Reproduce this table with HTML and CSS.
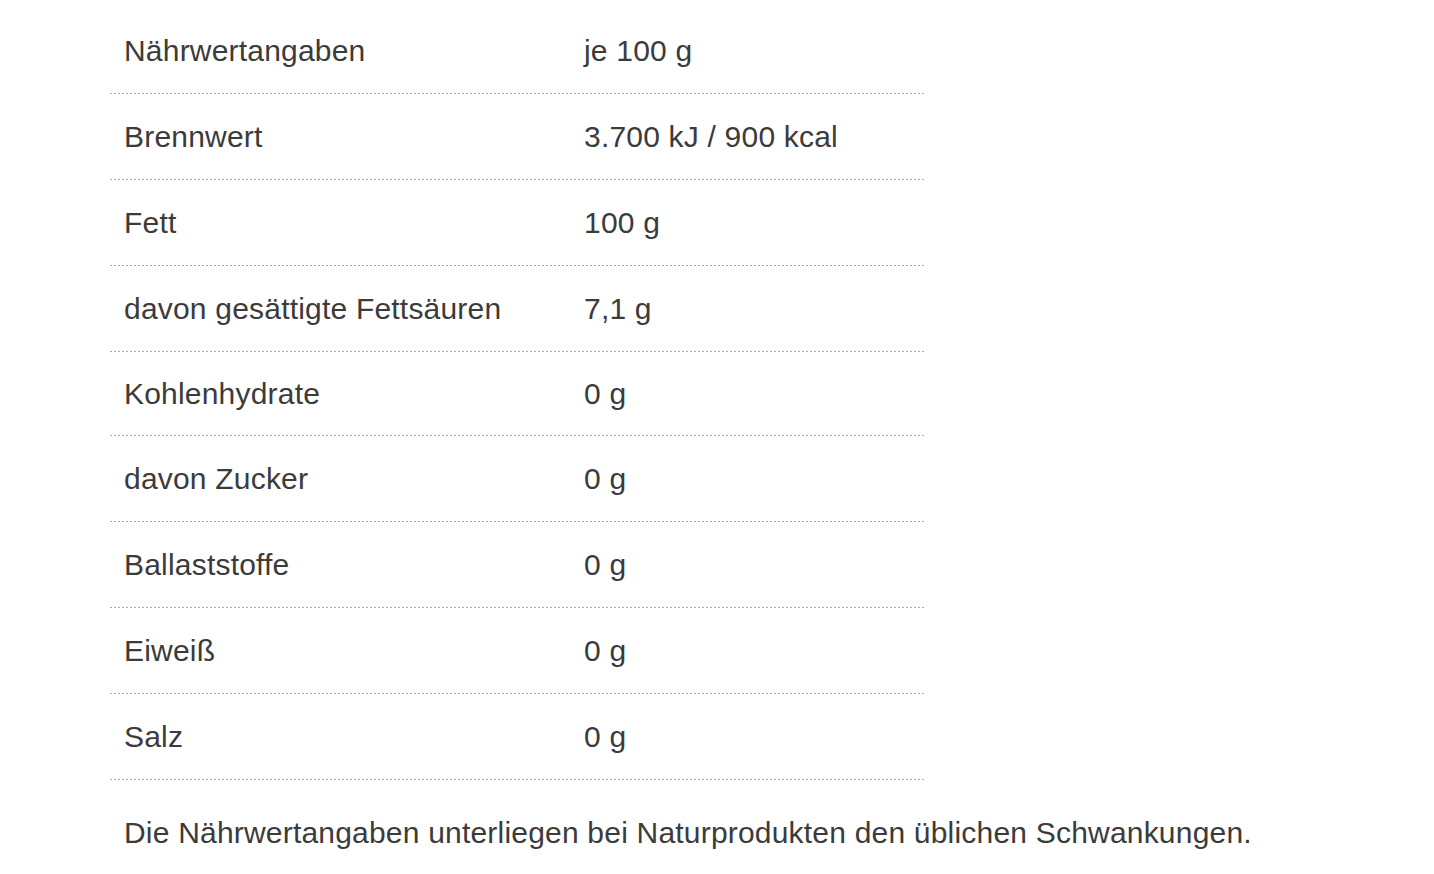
FILE: index.html
```html
<!DOCTYPE html>
<html lang="de">
<head>
<meta charset="utf-8">
<link rel="stylesheet" href="styles.css">
</head>
<body>
<main class="nutrition">
  <div class="table">
    <div class="row"><div class="label">Nährwertangaben</div><div class="value">je 100 g</div></div>
    <div class="row"><div class="label">Brennwert</div><div class="value">3.700 kJ / 900 kcal</div></div>
    <div class="row"><div class="label">Fett</div><div class="value">100 g</div></div>
    <div class="row"><div class="label">davon gesättigte Fettsäuren</div><div class="value">7,1 g</div></div>
    <div class="row short"><div class="label">Kohlenhydrate</div><div class="value">0 g</div></div>
    <div class="row"><div class="label">davon Zucker</div><div class="value">0 g</div></div>
    <div class="row"><div class="label">Ballaststoffe</div><div class="value">0 g</div></div>
    <div class="row"><div class="label">Eiweiß</div><div class="value">0 g</div></div>
    <div class="row"><div class="label">Salz</div><div class="value">0 g</div></div>
  </div>
  <p class="note">Die Nährwertangaben unterliegen bei Naturprodukten den üblichen Schwankungen.</p>
</main>
</body>
</html>
```
FILE: styles.css
```css
html, body {
  margin: 0;
  padding: 0;
  background: #ffffff;
}
body {
  font-family: "Liberation Sans", Arial, sans-serif;
  font-size: 30px;
  letter-spacing: 0.2px;
  color: #3b3b3b;
}
.nutrition {
  padding: 8px 0 0 110px;
}
.table {
  width: 814px;
}
.row {
  display: grid;
  grid-template-columns: 460px 1fr;
  align-items: center;
  height: 86px;
  box-sizing: border-box;
  padding-top: 1px;
  padding-bottom: 1px;
  background-image: linear-gradient(to right, #a9a9a9 50%, transparent 50%);
  background-size: 4px 1px;
  background-repeat: repeat-x;
  background-position: left bottom;
}
.row.short {
  height: 84px;
}
.label, .value {
  padding-left: 14px;
  white-space: nowrap;
}
.note {
  margin: 35px 0 0 14px;
  line-height: 36px;
}
```
